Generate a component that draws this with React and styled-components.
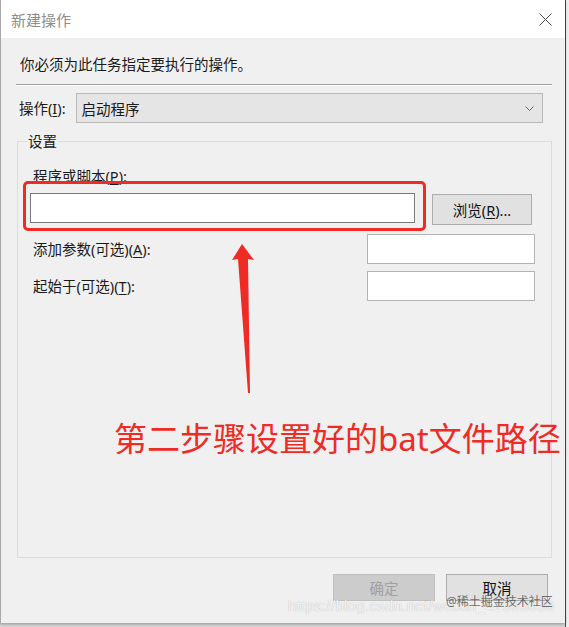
import React from "react";
import styled, { createGlobalStyle, css } from "styled-components";

const GlobalStyle = createGlobalStyle`
  html, body {
    margin: 0;
    padding: 0;
    height: 627px;
    overflow: hidden;
    background: #d4d4d4;
  }
  body {
    font-family: "Noto Sans", "Noto Sans CJK SC", sans-serif;
    font-size: 14.5px;
    color: #1a1a1a;
  }
`;

const Screen = styled.div`
  display: flex;
  width: 569px;
  height: 627px;
`;

const Dialog = styled.div`
  position: relative;
  display: flex;
  flex-direction: column;
  width: 564px;
  height: 623px;
  border-left: 1px solid #a8a8a8;
  box-shadow: 0 1px 3px rgba(0, 0, 0, 0.3);
`;

const Backdrop = styled.div`
  flex: 1;
  height: 627px;
  border-left: 1px solid #4a4a4a;
  background: #eeeeee;
`;

const TitleBar = styled.div`
  display: flex;
  align-items: center;
  justify-content: space-between;
  height: 38px;
  padding: 0 13px 0 10px;
  background: #ffffff;
`;

const Title = styled.span`
  font-size: 15px;
  color: #8e8e8e;
`;

const Body = styled.div`
  flex: 1;
  display: flex;
  flex-direction: column;
  padding: 16px 13px 0 15px;
  background: #f0f0f0;
`;

const Instruction = styled.div`
  margin-left: 4px;
  line-height: 20px;
`;

const Separator = styled.div`
  margin-top: 10px;
  height: 0;
  border-top: 1px solid #a0a0a0;
  border-bottom: 1px solid #ffffff;
`;

const ActionRow = styled.div`
  display: flex;
  align-items: center;
  margin-top: 7px;
  margin-right: 9px;
  height: 30px;
`;

const Label = styled.span`
  margin-left: ${(p) => p.$indent || 0}px;
  line-height: ${(p) => p.$lh || 20}px;
  white-space: nowrap;
`;

const Key = styled.span`
  text-decoration: underline;
  text-underline-offset: 2px;
`;

const Combo = styled.div`
  flex: 1;
  display: flex;
  align-items: center;
  justify-content: space-between;
  height: 30px;
  box-sizing: border-box;
  margin-left: 10px;
  padding: 0 8px 0 5px;
  background: #e5e5e5;
  border: 1px solid #b9b9b9;
`;

const GroupBox = styled.fieldset`
  flex: none;
  display: flex;
  flex-direction: column;
  height: 427px;
  box-sizing: border-box;
  margin: 8px 0 0 1px;
  padding: 0 0 0 5px;
  min-width: 0;
  border: 1px solid #dcdcdc;
`;

const Legend = styled.legend`
  margin-left: 4px;
  padding: 0 1px;
  line-height: 20px;
`;

const ScriptLabel = styled(Label)`
  margin-top: 17px;
`;

const PathRow = styled.div`
  display: flex;
  align-items: flex-start;
  margin-top: -3px;
`;

const Highlight = styled.div`
  padding: 9px 8px 5px 4px;
  border: 3px solid #ee2b24;
  border-radius: 5px;
`;

const TextBox = styled.div`
  width: ${(p) => p.$width}px;
  height: 30px;
  box-sizing: border-box;
  background: #ffffff;
  border: 1px solid ${(p) => (p.$strong ? "#7a7a7a" : "#b4b4b4")};
`;

const Button = styled.div`
  display: flex;
  align-items: center;
  justify-content: center;
  box-sizing: border-box;
  width: ${(p) => p.$width}px;
  height: ${(p) => p.$height}px;
  background: #e1e1e1;
  border: 1px solid #adadad;
  color: #111;
  ${(p) =>
    p.$disabled &&
    css`
      background: #cccccc;
      border-color: #bfbfbf;
      color: #a0a0a0;
    `}
`;

const BrowseButton = styled(Button)`
  margin: 13px 0 0 6px;
`;

const FieldRow = styled.div`
  display: flex;
  align-items: center;
  justify-content: space-between;
  margin-top: ${(p) => p.$top}px;
  margin-right: 16px;
  height: 30px;
`;

const Footer = styled.div`
  display: flex;
  justify-content: flex-end;
  gap: 11px;
  padding: 16px 4px 0 0;
`;

const Arrow = styled.svg`
  position: absolute;
  left: 228px;
  top: 240px;
`;

const Note = styled.div`
  position: absolute;
  left: 113px;
  top: 419px;
  font-size: 33px;
  line-height: 40px;
  color: #ee2b24;
  white-space: nowrap;
`;

const Watermark = styled.div`
  position: absolute;
  left: 287px;
  top: 597px;
  font-family: "Liberation Sans", sans-serif;
  font-size: 15px;
  letter-spacing: 0.3px;
  color: rgba(255, 255, 255, 0.85);
  text-shadow: 0 0 1px rgba(120, 120, 120, 0.6);
  white-space: nowrap;
`;

const Brand = styled.div`
  position: absolute;
  left: 445px;
  top: 592px;
  font-size: 12px;
  color: rgba(70, 70, 70, 0.75);
  white-space: nowrap;
`;

function CloseIcon() {
  return (
    <svg width="13" height="13" viewBox="0 0 13 13">
      <path d="M0.5 0.5L12.5 12.5M12.5 0.5L0.5 12.5" stroke="#4a4a4a" strokeWidth="1" fill="none" />
    </svg>
  );
}

function Chevron() {
  return (
    <svg width="9" height="5" viewBox="0 0 9 5">
      <path d="M0.5 0.5L4.5 4.5L8.5 0.5" stroke="#6a6a6a" strokeWidth="1" fill="none" />
    </svg>
  );
}

export default function App() {
  return (
    <>
      <GlobalStyle />
      <Screen>
        <Dialog>
          <TitleBar>
            <Title>新建操作</Title>
            <CloseIcon />
          </TitleBar>
          <Body>
            <Instruction>你必须为此任务指定要执行的操作。</Instruction>
            <Separator />
            <ActionRow>
              <Label $indent={3}>
                操作(<Key>I</Key>):
              </Label>
              <Combo>
                <span>启动程序</span>
                <Chevron />
              </Combo>
            </ActionRow>
            <GroupBox>
              <Legend>设置</Legend>
              <ScriptLabel $indent={10} $lh={16}>
                程序或脚本(<Key>P</Key>):
              </ScriptLabel>
              <PathRow>
                <Highlight>
                  <TextBox $width={385} $strong />
                </Highlight>
                <BrowseButton $width={100} $height={31}>
                  浏览(<Key>R</Key>)...
                </BrowseButton>
              </PathRow>
              <FieldRow $top={3}>
                <Label $indent={10}>
                  添加参数(可选)(<Key>A</Key>):
                </Label>
                <TextBox $width={168} />
              </FieldRow>
              <FieldRow $top={7}>
                <Label $indent={10}>
                  起始于(可选)(<Key>T</Key>):
                </Label>
                <TextBox $width={168} />
              </FieldRow>
            </GroupBox>
            <Footer>
              <Button $width={102} $height={27} $disabled>
                确定
              </Button>
              <Button $width={102} $height={27}>
                取消
              </Button>
            </Footer>
          </Body>

          <Arrow width="30" height="156" viewBox="0 0 30 156">
            <polygon points="13,4 25,20 19,19 21,153 19,153 9,19 3,20" fill="#ee2b24" />
          </Arrow>
          <Note>第二步骤设置好的bat文件路径</Note>
          <Watermark>https://blog.csdn.net/weixin_41993030</Watermark>
          <Brand>@稀土掘金技术社区</Brand>
        </Dialog>
        <Backdrop />
      </Screen>
    </>
  );
}
